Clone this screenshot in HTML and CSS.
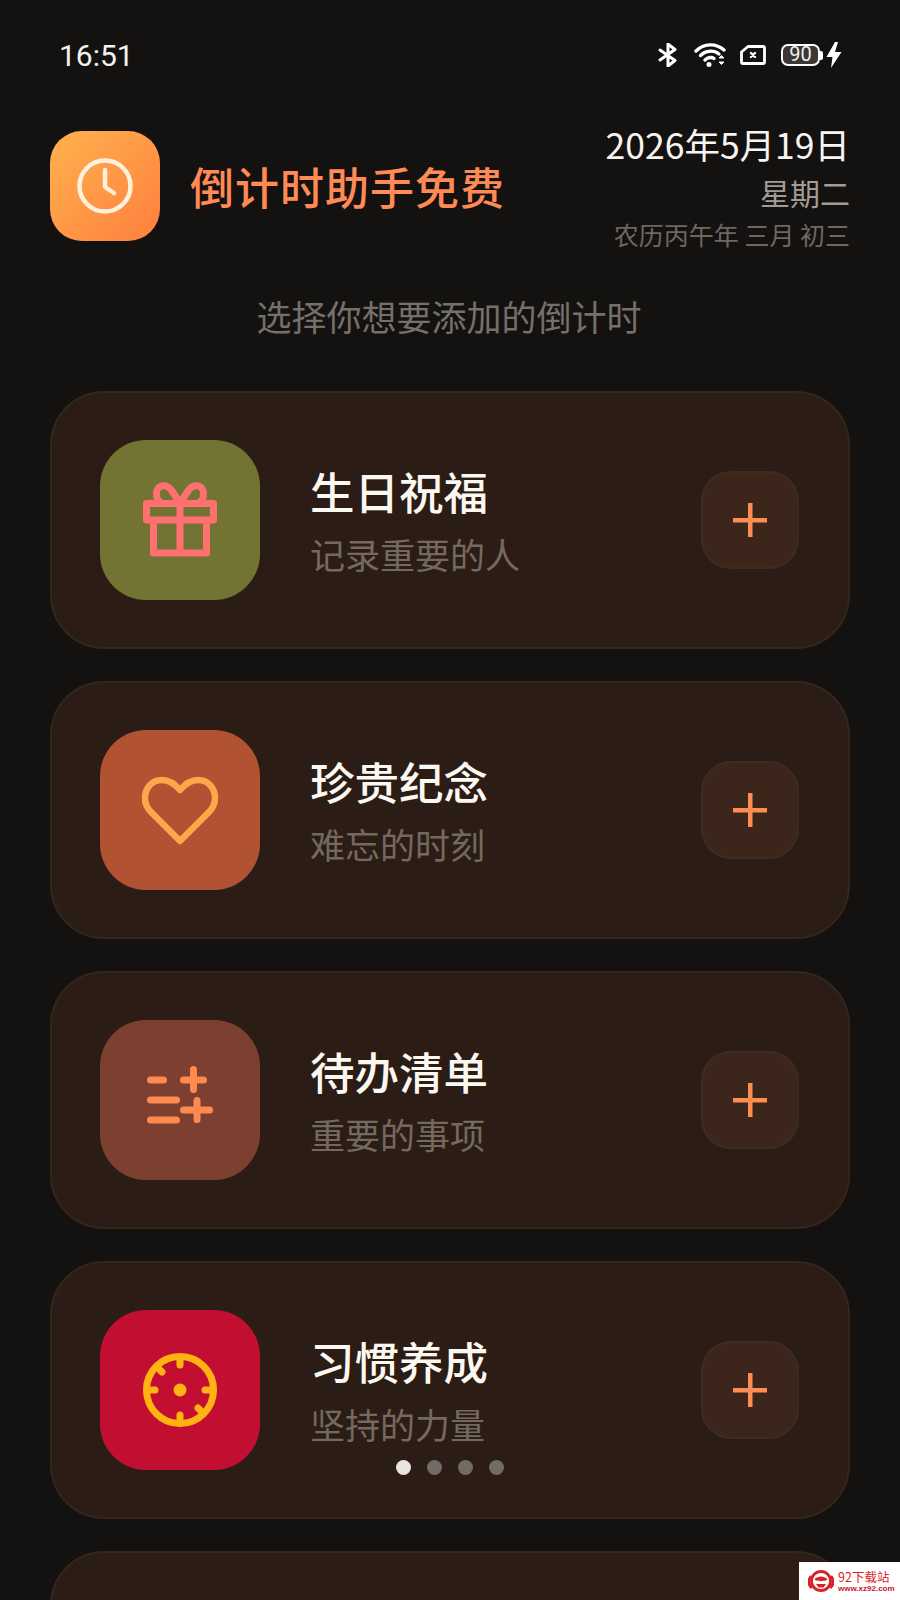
FILE: index.html
```html
<!doctype html>
<html lang="zh">

<head>
    <meta charset="UTF-8">
    <meta name="viewport" content="width=device-width, initial-scale=1.0">
    <title>倒计时助手免费</title>
    <link rel="stylesheet" href="styles.css">
</head>

<body>
    <div class="page">
        <div class="status_bar">
            <div class="time">16:51</div>
            <div class="status_icons">
                <svg class="ic_bt" width="20" height="24" viewBox="0 0 20 24">
                    <path d="M2 7 L17 17.500 L10 23 V1 L17 6.500 L2 17" fill="none" stroke="#fff" stroke-width="3" stroke-linejoin="round" stroke-linecap="round" />
                </svg>
                <svg class="ic_wifi" width="33" height="24" viewBox="0 0 33 24">
                    <g fill="none" stroke="#fff" stroke-width="3.400" stroke-linecap="round">
                        <path d="M2 8 C10 0 22 0 30 7" />
                        <path d="M6.500 12.500 C12 7 20 7 25 11" />
                        <path d="M11 17 C14 14 18 14 20 15.500" />
                    </g>
                    <circle cx="15" cy="21.500" r="2.500" fill="#fff" />
                    <path d="M25 15 L27.500 12.500 L30 15 Z M25 19 H30 L27.500 21.500 Z" fill="#fff" stroke="#fff" stroke-linejoin="round" />
                </svg>
                <svg class="ic_sim" width="26" height="20" viewBox="0 0 26 20">
                    <path d="M8 1.500 H23 A1.500 1.500 0 0 1 24.500 3 V17 A1.500 1.500 0 0 1 23 18.500 H3 A1.500 1.500 0 0 1 1.500 17 V7 Z" fill="none" stroke="#fff" stroke-width="2.800" stroke-linejoin="round" />
                    <path d="M11 8 L15 12 M15 8 L11 12" stroke="#fff" stroke-width="2.400" stroke-linecap="round" />
                </svg>
                <div class="battery">
                    <div class="battery_body">90</div>
                    <div class="battery_cap"></div>
                </div>
                <svg class="ic_bolt" width="16" height="26" viewBox="0 0 16 26">
                    <path d="M9 0 L0.500 15 H6.500 L5 26 L15.500 10 H9 L12 0 Z" fill="#fff" />
                </svg>
            </div>
        </div>

        <div class="header">
            <div class="app_icon">
                <svg width="60" height="60" viewBox="0 0 60 60">
                    <circle cx="30" cy="30" r="25.500" fill="none" stroke="#fff1dc" stroke-width="4.500" />
                    <path d="M30 14 V31 L39 37" fill="none" stroke="#fff1dc" stroke-width="4.500" stroke-linecap="round" stroke-linejoin="round" />
                </svg>
            </div>
            <div class="app_name">倒计时助手免费</div>
            <div class="date_box">
                <div class="date_main">2026年5月19日</div>
                <div class="date_week">星期二</div>
                <div class="date_lunar">农历丙午年 三月 初三</div>
            </div>
        </div>

        <div class="subtitle">选择你想要添加的倒计时</div>

        <div class="list">
            <div class="card">
                <div class="tile tile_gift">
                    <svg width="80" height="80" viewBox="0 0 80 80">
                        <g fill="none" stroke="#ff7070" stroke-width="7" stroke-linejoin="round">
                            <rect x="6.500" y="23.500" width="67" height="16.500" />
                            <path d="M13.500 40 V73 H66.500 V40" />
                            <path d="M40 23.500 V73" />
                            <path d="M40 23.500 L32 11 C27 3 16.500 4 16.500 14 C16.500 20 20 23.500 25 23.500" />
                            <path d="M40 23.500 L48 11 C53 3 63.500 4 63.500 14 C63.500 20 60 23.500 55 23.500" />
                        </g>
                    </svg>
                </div>
                <div class="card_text">
                    <div class="card_title">生日祝福</div>
                    <div class="card_sub">记录重要的人</div>
                </div>
                <div class="add_btn"><div class="plus"></div></div>
            </div>

            <div class="card">
                <div class="tile tile_heart">
                    <svg width="80" height="80" viewBox="0 0 80 80">
                        <path d="M40 20 C34 13 28 10 22 10 C12 10 5 18 5 28 C5 34 7 38 11 42 L40 71 L69 42 C73 38 75 34 75 28 C75 18 68 10 58 10 C52 10 46 13 40 20 Z" fill="none" stroke="#ffa64d" stroke-width="6.500" stroke-linejoin="round" />
                    </svg>
                </div>
                <div class="card_text">
                    <div class="card_title">珍贵纪念</div>
                    <div class="card_sub">难忘的时刻</div>
                </div>
                <div class="add_btn"><div class="plus"></div></div>
            </div>

            <div class="card">
                <div class="tile tile_todo">
                    <svg width="80" height="80" viewBox="0 0 80 80">
                        <path d="M10.500 20 H23.500 M10.500 40 H36.500 M10.500 60 H36.500 M43.500 20 H63.500 M53.500 9.500 V29.500 M43.500 50 H69.500 M57 40.500 V59.500" fill="none" stroke="#ff8a50" stroke-width="7" stroke-linecap="round" />
                    </svg>
                </div>
                <div class="card_text">
                    <div class="card_title">待办清单</div>
                    <div class="card_sub">重要的事项</div>
                </div>
                <div class="add_btn"><div class="plus"></div></div>
            </div>

            <div class="card">
                <div class="tile tile_habit">
                    <svg width="80" height="80" viewBox="0 0 80 80">
                        <circle cx="40" cy="40" r="33.500" fill="none" stroke="#ffb312" stroke-width="7" />
                        <circle cx="40" cy="40" r="6.500" fill="#ffb312" />
                        <path d="M40 7 V15 M40 65 V73 M7 40 H15 M65 40 H73 M17 17 L22 22 M58 58 L63 63" fill="none" stroke="#ffb312" stroke-width="7" stroke-linecap="round" />
                    </svg>
                </div>
                <div class="card_text">
                    <div class="card_title">习惯养成</div>
                    <div class="card_sub">坚持的力量</div>
                </div>
                <div class="add_btn"><div class="plus"></div></div>
            </div>

            <div class="card"></div>
        </div>

        <div class="dots">
            <div class="dot dot_on"></div>
            <div class="dot"></div>
            <div class="dot"></div>
            <div class="dot"></div>
        </div>

        <div class="watermark">
            <svg width="26" height="24" viewBox="0 0 26 24">
                <circle cx="13" cy="12" r="9.500" fill="none" stroke="#d8222a" stroke-width="2.800" />
                <path d="M2.500 8 C0.500 11 0.500 15 3 18 M23.500 8 C25.500 11 25.500 15 23 18" fill="none" stroke="#d8222a" stroke-width="3" stroke-linecap="round" />
                <path d="M6.500 10 C10 6.500 16 6.500 19.500 10 C17.500 13 15 11 13 12.500 C11 11 8.500 13 6.500 10 Z M8 15 H18 L15.500 18.500 H10.500 Z" fill="#d8222a" />
            </svg>
            <div class="wm_text">
                <div class="wm_name">92下载站</div>
                <div class="wm_url">www.xz92.com</div>
            </div>
        </div>
    </div>
</body>

</html>
```

FILE: styles.css
```css
* {
    box-sizing: border-box;
}

body {
    margin: 0;
    background: #141210;
    font-family: "Noto Sans CJK SC", "Noto Sans", sans-serif;
}

.page {
    position: relative;
    width: 900px;
    height: 1600px;
    overflow: hidden;
    background: #141210;
}

/* status bar */
.status_bar {
    display: flex;
    align-items: center;
    justify-content: space-between;
    height: 110px;
    padding: 0 58px 0 59px;
}

.time {
    color: #f4f2ef;
    font-family: Roboto, sans-serif;
    font-size: 30px;
}

.status_icons {
    display: flex;
    align-items: center;
}

.ic_bt {
    margin-right: 16px;
}

.ic_wifi {
    margin-right: 13px;
}

.ic_sim {
    margin-right: 15px;
}

.ic_bolt {
    margin-left: 3px;
}

.battery {
    display: flex;
    align-items: center;
}

.battery_body {
    width: 39px;
    height: 22px;
    border: 2.500px solid #fff;
    border-radius: 7px;
    background: #3a3735;
    color: #efefef;
    font-family: Roboto, sans-serif;
    font-size: 20px;
    line-height: 17px;
    text-align: center;
}

.battery_cap {
    width: 3px;
    height: 9px;
    background: #fff;
    border-radius: 0 2px 2px 0;
}

/* header */
.header {
    display: flex;
    align-items: center;
    height: 120px;
    margin-top: 16px;
    padding: 0 50px;
}

.app_icon {
    display: flex;
    align-items: center;
    justify-content: center;
    width: 110px;
    height: 110px;
    border-radius: 32px;
    background: linear-gradient(135deg, #ffb24e, #ff7f3e);
}

.app_name {
    margin-left: 30px;
    color: #ff8a55;
    font-size: 44px;
    font-weight: 500;
    letter-spacing: 1px;
}

.date_box {
    margin-left: auto;
    text-align: right;
}

.date_main {
    color: #f7f5f2;
    font-size: 35.500px;
    line-height: 49px;
}

.date_week {
    color: #a39c95;
    font-size: 30px;
    line-height: 48px;
}

.date_lunar {
    color: #6f6862;
    font-size: 25px;
    line-height: 37px;
}

.subtitle {
    margin-top: 40px;
    color: #75706a;
    font-size: 35px;
    line-height: 60px;
    text-align: center;
    padding-right: 2px;
}

/* cards */
.list {
    display: flex;
    flex-direction: column;
    gap: 32px;
    margin-top: 45px;
    padding: 0 50px;
}

.card {
    display: flex;
    align-items: center;
    flex-shrink: 0;
    height: 258px;
    padding: 0 50px;
    border: 2px solid #35261c;
    border-radius: 54px;
    background: #2b1d15;
}

.tile {
    display: flex;
    align-items: center;
    justify-content: center;
    flex-shrink: 0;
    width: 160px;
    height: 160px;
    margin-left: -2px;
    border-radius: 46px;
}

.tile_gift {
    background: #737333;
}

.tile_heart {
    background: #b15232;
}

.tile_todo {
    background: #7d3f30;
}

.tile_habit {
    background: #c20e30;
}

.card_text {
    margin-left: 50px;
    padding-bottom: 2px;
}

.card_title {
    color: #fbf7f1;
    font-size: 44.500px;
    font-weight: 500;
    line-height: 64px;
}

.card_sub {
    margin-top: 6px;
    color: #75695f;
    font-size: 35px;
    line-height: 50px;
}

.add_btn {
    display: flex;
    align-items: center;
    justify-content: center;
    width: 98px;
    height: 98px;
    margin-left: auto;
    margin-right: -1px;
    border: 2px solid #3e2c22;
    border-radius: 30px;
    background: #3c261b;
}

.plus {
    width: 34px;
    height: 34px;
    background:
        linear-gradient(#ff8c50, #ff8c50) center / 100% 4.500px no-repeat,
        linear-gradient(#ff8c50, #ff8c50) center / 4.500px 100% no-repeat;
    border-radius: 2px;
}

/* pager, lies over the list */
.dots {
    position: absolute;
    left: 396px;
    top: 1460px;
    display: flex;
    gap: 16px;
}

.dot {
    width: 15px;
    height: 15px;
    border-radius: 50%;
    background: #736b65;
}

.dot_on {
    background: #e8e4df;
}

/* site stamp in the corner */
.watermark {
    position: absolute;
    right: 0;
    bottom: 0;
    display: flex;
    align-items: center;
    width: 101px;
    height: 38px;
    padding-left: 9px;
    background: #fff;
}

.wm_text {
    margin-left: 4px;
}

.wm_name {
    color: #d8222a;
    font-size: 12.500px;
    line-height: 15px;
}

.wm_url {
    color: #c8161e;
    font-family: "Liberation Sans", sans-serif;
    font-size: 8px;
    font-weight: 700;
    line-height: 10px;
    white-space: nowrap;
}
```
